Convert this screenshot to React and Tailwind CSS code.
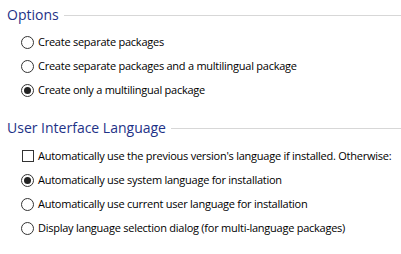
import { useState } from "react";

const packageOptions = [
  "Create separate packages",
  "Create separate packages and a multilingual package",
  "Create only a multilingual package",
];

const languageOptions = [
  "Automatically use system language for installation",
  "Automatically use current user language for installation",
  "Display language selection dialog (for multi-language packages)",
];

function GroupHeader({ title }) {
  return (
    <div className="flex h-[22px] items-center pl-[7px]">
      <span className="whitespace-nowrap text-[14px] leading-none text-[#1e3287]">{title}</span>
      <div className="ml-[5px] h-px flex-1 bg-[#d7d7d7]" />
    </div>
  );
}

function Radio({ checked, label, onSelect }) {
  return (
    <div className="flex h-6 items-center pl-[21px]" onClick={onSelect}>
      <span className="flex h-[13px] w-[13px] shrink-0 items-center justify-center rounded-full border border-[#333] bg-white">
        {checked && <span className="h-[7px] w-[7px] rounded-full bg-[#222]" />}
      </span>
      <span className="ml-[4px] whitespace-nowrap text-[11px] tracking-[-0.25px] text-black">{label}</span>
    </div>
  );
}

export default function App() {
  const [pkg, setPkg] = useState(2);
  const [lang, setLang] = useState(0);
  const [usePrevious, setUsePrevious] = useState(false);

  return (
    <div
      className="h-[254px] w-[401px] overflow-hidden bg-white pt-1"
      style={{ fontFamily: '"Open Sans", "Noto Sans", sans-serif' }}
    >
      <GroupHeader title="Options" />
      <div className="mt-1">
        {packageOptions.map((label, i) => (
          <Radio key={label} label={label} checked={pkg === i} onSelect={() => setPkg(i)} />
        ))}
      </div>

      <div className="mt-[15px]">
        <GroupHeader title="User Interface Language" />
      </div>
      <div className="mt-[5px]">
        <div className="flex h-6 items-center pl-[22px]" onClick={() => setUsePrevious(!usePrevious)}>
          <span className="flex h-[12px] w-[12px] shrink-0 items-center justify-center border border-[#333] bg-white text-[10px] leading-none">
            {usePrevious ? "✓" : ""}
          </span>
          <span className="ml-[4px] whitespace-nowrap text-[11px] tracking-[-0.25px] text-black">
            Automatically use the previous version's language if installed. Otherwise:
          </span>
        </div>
        {languageOptions.map((label, i) => (
          <Radio key={label} label={label} checked={lang === i} onSelect={() => setLang(i)} />
        ))}
      </div>
    </div>
  );
}
